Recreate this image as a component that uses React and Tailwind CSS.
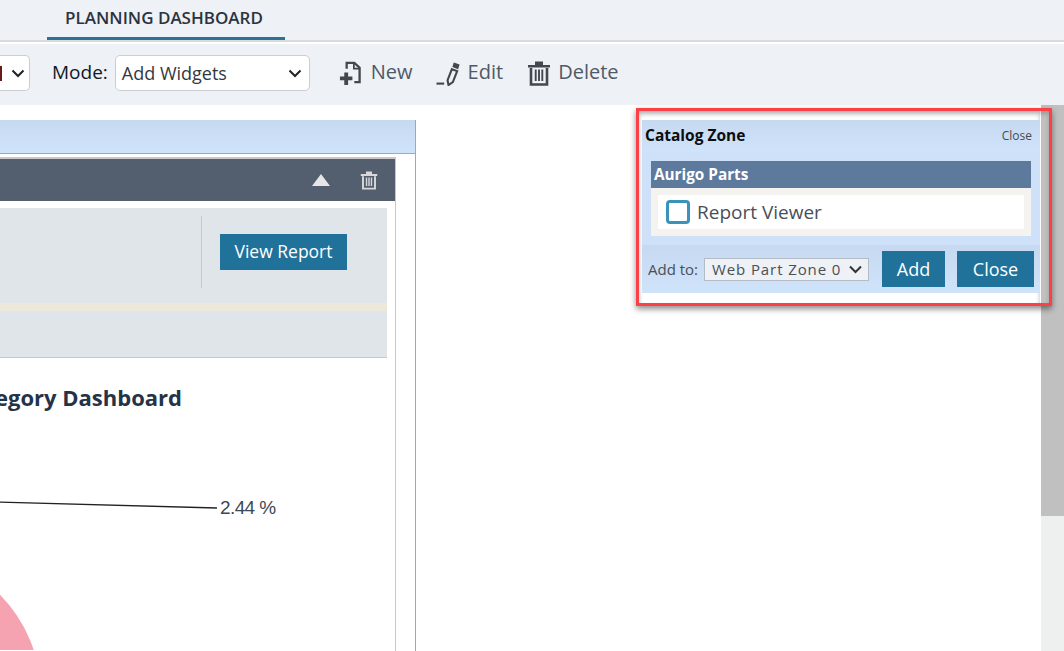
import React from 'react';

const Chevron = ({ className }) => (
  <svg viewBox="0 0 14 9" className={className} fill="none" stroke="currentColor" strokeWidth="2">
    <path d="M1.5 1.5 L7 7 L12.5 1.5" />
  </svg>
);

const NewIcon = () => (
  <svg viewBox="0 0 24 26" className="w-[23px] h-[25px] text-[#43484f]">
    <path d="M8 8 V2 H16 L21.5 7 V22 H16" fill="none" stroke="currentColor" strokeWidth="2.4" />
    <path d="M15.5 2 V8 H21" fill="none" stroke="currentColor" strokeWidth="1.8" />
    <path d="M5.5 12 H9.5 V16 H14 V20 H9.5 V25 H5.5 V20 H1 V16 H5.5 Z" fill="currentColor" />
  </svg>
);

const EditIcon = () => (
  <svg viewBox="0 0 26 26" className="w-[26px] h-[25px] text-[#43484f]">
    <path d="M0 23.5 H8" stroke="currentColor" strokeWidth="2.2" />
    <path d="M16 8.5 L21.5 10.5 L17 22 L12.5 25 L11.5 20 Z" fill="none" stroke="currentColor" strokeWidth="2.2" />
    <path d="M18 1.5 L24 3.7 L22.5 8.5 L16.5 6.3 Z" fill="currentColor" />
  </svg>
);

const TrashIcon = ({ className }) => (
  <svg viewBox="0 0 24 26" className={className}>
    <path d="M1 5 H23 V7.5 H1 Z M8 1.5 H16 V5 H8 Z" fill="currentColor" />
    <path d="M4 8 V24.5 H20 V8" fill="none" stroke="currentColor" strokeWidth="2.6" />
    <path d="M8.7 9.5 V21 M12 9.5 V21 M15.3 9.5 V21" stroke="currentColor" strokeWidth="1.9" />
  </svg>
);

const ToolButton = ({ icon, label, className }) => (
  <div className={`flex items-center text-[#4e5a68] text-[20px] ${className}`}>
    {icon}
    <span className="pb-[2px]">{label}</span>
  </div>
);

const CatalogZone = () => (
  <div className="absolute left-[636px] top-[108px] w-[416px] h-[198px] border-[3px] border-[#fb4046] shadow-[0_3px_6px_rgba(0,0,0,0.45),inset_0_3px_4px_rgba(0,0,0,0.2)]">
    <div className="w-[401px] h-full bg-white pl-[3px] pt-[9px] shadow-[inset_0_3px_4px_rgba(0,0,0,0.3)]">
      <div className="w-[398px] h-[173px] bg-[#cbdff6]">
        <div className="h-[32px] flex items-center justify-between pl-[3px] pr-[8px] bg-gradient-to-b from-[#c6d9f0] to-[#cfe3fb]">
          <span className="text-[15.5px] font-bold text-[#0d0d0d]">Catalog Zone</span>
          <span className="text-[12px] text-[#4a4a4a]">Close</span>
        </div>
        <div className="px-[9px] py-[9px] bg-[#cee1f8]">
          <div className="h-[27px] bg-[#5d7a9d] flex items-center pl-[3px] text-[15.3px] font-bold text-white">Aurigo Parts</div>
          <div className="h-[48px] bg-[#f4f3ef] px-[7px] py-[7px]">
            <div className="h-[34px] bg-white flex items-center pl-[8px] gap-[7px] text-[19px] text-[#4a4f57]">
              <span className="w-[24px] h-[24px] rounded-[4px] border-[3px] border-[#3a93b8] bg-white" />
              <span>Report Viewer</span>
            </div>
          </div>
        </div>
        <div className="h-[48px] flex items-center pl-[6px] bg-gradient-to-b from-[#c6d9f0] to-[#cfe3fb]">
          <span className="w-[56px] text-[15px] text-[#4a4f57] whitespace-nowrap">Add to:</span>
          <div className="w-[165px] h-[23px] bg-[#eef1f5] border border-[#b4bcc6] flex items-center justify-between pl-[7px] pr-[5px] text-[15px] tracking-[0.9px] text-[#4a4f57]">
            <span>Web Part Zone 0</span>
            <Chevron className="w-[15px] h-[9px] text-[#333]" />
          </div>
          <div className="ml-[13px] w-[63px] h-[36px] bg-[#20729a] text-white text-[18px] flex items-center justify-center">Add</div>
          <div className="ml-[12px] w-[77px] h-[36px] bg-[#20729a] text-white text-[18px] flex items-center justify-center">Close</div>
        </div>
      </div>
    </div>
  </div>
);

export default function App() {
  return (
    <div className="relative w-[1064px] h-[651px] overflow-hidden bg-white" style={{ fontFamily: '"Open Sans", sans-serif' }}>
      {/* top tabs */}
      <div className="h-[42px] bg-[#eef1f5] border-b-2 border-[#d8dadc] pl-[47px]">
        <div className="w-[238px] h-[40px] border-b-[3px] border-[#2a7396] flex items-center justify-center text-[17px] font-semibold text-[#2a3340] pb-[1px] pr-[4px]">
          PLANNING DASHBOARD
        </div>
      </div>
      <div className="h-[2px] bg-white" />

      {/* toolbar */}
      <div className="h-[61px] bg-[#eef1f5] flex items-center pb-[3px]">
        <div className="w-[30px] h-[36px] bg-white border border-l-0 border-[#c9ced4] rounded-r-[5px] flex items-center justify-between pr-[4px]">
          <span className="w-[2px] h-[15px] bg-[#6b1a1a]" />
          <Chevron className="w-[14px] h-[9px] text-[#222]" />
        </div>
        <span className="ml-[22px] pb-[2px] text-[19px] font-medium text-[#111827]">Mode:</span>
        <div className="ml-[7px] w-[195px] h-[36px] bg-white border border-[#c9ced4] rounded-[5px] flex items-center justify-between pl-[6px] pr-[7px] text-[18px] text-[#33383f]">
          <span>Add Widgets</span>
          <Chevron className="w-[14px] h-[9px] text-[#222]" />
        </div>
        <ToolButton className="ml-[29px] gap-[9px]" icon={<NewIcon />} label="New" />
        <ToolButton className="ml-[23px] gap-[6px]" icon={<EditIcon />} label="Edit" />
        <ToolButton className="ml-[24px] gap-[7px]" icon={<TrashIcon className="w-[24px] h-[26px] text-[#43484f]" />} label="Delete" />
      </div>

      <div className="flex h-[546px]">
        {/* page area */}
        <div className="w-[1041px] pt-[15px]">
          <div className="w-[416px] h-[531px] border-r border-[#8fa9dc]">
            <div className="h-[34px] border-b border-[#8fa9dc] bg-gradient-to-b from-[#c6d9f0] to-[#cfe3fb]" />
            <div className="pt-[3px] pr-[19px]">
              <div className="border-r border-[#c8c8c8] h-[495px]">
                <div className="h-[44px] border-t-2 border-[#c8c8c8] bg-[#535e6e] flex items-center justify-end pr-[17px] gap-[30px]">
                  <span className="w-0 h-0 border-l-[9px] border-r-[9px] border-b-[12px] border-l-transparent border-r-transparent border-b-[#e6e6e6]" />
                  <TrashIcon className="w-[18px] h-[20px] text-[#d8d8d8]" />
                </div>
                <div className="pt-[7px] pr-[8px]">
                  <div className="h-[150px] bg-[#e0e5ea] border-b border-[#c5c9ce]">
                    <div className="h-[95px] flex pt-[8px]">
                      <div className="ml-[201px] w-px h-[72px] bg-[#c5c9ce]" />
                      <div className="ml-[18px] mt-[18px] w-[127px] h-[36px] bg-[#20729a] text-white text-[17.5px] pb-[1px] flex items-center justify-center">View Report</div>
                    </div>
                    <div className="h-[8px] bg-[#ece9da]" />
                  </div>
                </div>
                <div className="h-[293px] relative overflow-hidden">
                  <h2 className="mt-[24px] w-[182px] overflow-hidden whitespace-nowrap flex justify-end text-[22px] font-bold leading-[30px] text-[#253349]">
                    <span>Category Dashboard</span>
                  </h2>
                  <svg viewBox="0 0 395 237" className="w-[395px] h-[237px] mt-[1px]">
                    <path d="M-5 89 L217 95" stroke="#222" strokeWidth="1.4" fill="none" />
                    <text x="220" y="101" fontFamily="Liberation Sans" fontSize="19" letterSpacing="-0.6" fill="#3d4856">2.44 %</text>
                    <circle cx="-102" cy="282" r="143" fill="#f5a3b1" />
                  </svg>
                </div>
              </div>
            </div>
          </div>
        </div>

        {/* scrollbar */}
        <div className="w-[23px] bg-[#eef0f0]">
          <div className="h-[411px] bg-[#c0c0c0]" />
        </div>
      </div>

      <CatalogZone />
    </div>
  );
}
